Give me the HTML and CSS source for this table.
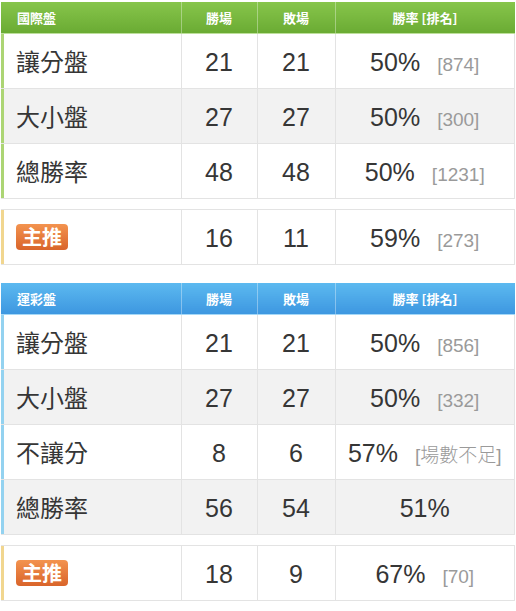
FILE: index.html
```html
<!DOCTYPE html>
<html lang="zh-Hant">
<head>
<meta charset="utf-8">
<title>盤口統計</title>
<link rel="stylesheet" href="styles.css">
</head>
<body>
<div class="page">
  <section class="group green">
    <table class="stats">
      <colgroup><col class="c1"><col class="c2"><col class="c3"><col class="c4"></colgroup>
      <thead>
        <tr><th class="name">國際盤</th><th>勝場</th><th>敗場</th><th>勝率 [排名]</th></tr>
      </thead>
      <tbody>
        <tr><td class="label">讓分盤</td><td>21</td><td>21</td><td><span class="pct">50%</span><span class="rank">[874]</span></td></tr>
        <tr class="alt"><td class="label">大小盤</td><td>27</td><td>27</td><td><span class="pct">50%</span><span class="rank">[300]</span></td></tr>
        <tr><td class="label">總勝率</td><td>48</td><td>48</td><td><span class="pct">50%</span><span class="rank">[1231]</span></td></tr>
      </tbody>
    </table>
    <table class="stats pick">
      <colgroup><col class="c1"><col class="c2"><col class="c3"><col class="c4"></colgroup>
      <tbody>
        <tr><td class="label"><span class="badge">主推</span></td><td>16</td><td>11</td><td><span class="pct">59%</span><span class="rank">[273]</span></td></tr>
      </tbody>
    </table>
  </section>

  <section class="group blue">
    <table class="stats">
      <colgroup><col class="c1"><col class="c2"><col class="c3"><col class="c4"></colgroup>
      <thead>
        <tr><th class="name">運彩盤</th><th>勝場</th><th>敗場</th><th>勝率 [排名]</th></tr>
      </thead>
      <tbody>
        <tr><td class="label">讓分盤</td><td>21</td><td>21</td><td><span class="pct">50%</span><span class="rank">[856]</span></td></tr>
        <tr class="alt"><td class="label">大小盤</td><td>27</td><td>27</td><td><span class="pct">50%</span><span class="rank">[332]</span></td></tr>
        <tr><td class="label">不讓分</td><td>8</td><td>6</td><td><span class="pct">57%</span><span class="rank">[場數不足]</span></td></tr>
        <tr class="alt"><td class="label">總勝率</td><td>56</td><td>54</td><td><span class="pct">51%</span></td></tr>
      </tbody>
    </table>
    <table class="stats pick">
      <colgroup><col class="c1"><col class="c2"><col class="c3"><col class="c4"></colgroup>
      <tbody>
        <tr><td class="label"><span class="badge">主推</span></td><td>18</td><td>9</td><td><span class="pct">67%</span><span class="rank">[70]</span></td></tr>
      </tbody>
    </table>
  </section>
</div>
</body>
</html>
```

FILE: styles.css
```css
html, body {
  margin: 0;
  padding: 0;
  background: #ffffff;
}

body {
  font-family: "Liberation Sans", "Noto Sans CJK TC", sans-serif;
  color: #333333;
}

.page {
  padding: 2px 1px 0 1px;
}

.group + .group {
  margin-top: 18px;
}

.stats {
  width: 100%;
  border-collapse: collapse;
  table-layout: fixed;
}

.stats .c1 { width: 180px; }
.stats .c2 { width: 76px; }
.stats .c3 { width: 78px; }

.stats th {
  height: 31px;
  padding: 0;
  font-size: 13px;
  font-weight: bold;
  color: #ffffff;
  text-align: center;
  font-family: "Noto Sans CJK TC", sans-serif;
  border-left: 1px solid rgba(255, 255, 255, 0.35);
  border-bottom: 1px solid rgba(255, 255, 255, 0.45);
}

.stats th:first-child {
  border-left: none;
}

.stats th.name {
  text-align: left;
  padding-left: 16px;
}

.green th {
  background: linear-gradient(#87c54b, #6aab33);
}

.blue th {
  background: linear-gradient(#5cb9f0, #3d97e0);
}

.stats td {
  height: 52px;
  padding: 2px 0 0 0;
  text-align: center;
  font-size: 25px;
  color: #363636;
  border: 1px solid #e3e3e3;
  border-top: none;
  background: #ffffff;
}

.stats td:first-child {
  border-left: none;
}

.stats tr.alt td {
  background: #f2f2f2;
}

.stats td.label {
  text-align: left;
  padding: 0 0 2px 15px;
  font-family: "Noto Sans CJK TC", sans-serif;
  font-size: 24px;
}

.green .stats td.label {
  box-shadow: inset 3px 0 0 #acd574;
}

.blue .stats td.label {
  box-shadow: inset 3px 0 0 #93d2f0;
}

.stats.pick {
  margin-top: 10px;
}

.stats.pick td {
  border-top: 1px solid #e3e3e3;
}

.stats.pick td.label {
  box-shadow: inset 3px 0 0 #f1d68f;
}

.pct {
  color: #363636;
}

.rank {
  margin-left: 17px;
  font-size: 19px;
  color: #9a9a9a;
  font-family: "Liberation Sans", "Noto Sans CJK TC", sans-serif;
  font-weight: 300;
}

.badge {
  display: inline-flex;
  align-items: center;
  justify-content: center;
  width: 52px;
  height: 26px;
  border-radius: 4px;
  background: linear-gradient(#f3934f, #d9642a);
  color: #ffffff;
  font-size: 20px;
  font-weight: bold;
  line-height: 1;
  vertical-align: middle;
  position: relative;
  top: -3px;
}
```
